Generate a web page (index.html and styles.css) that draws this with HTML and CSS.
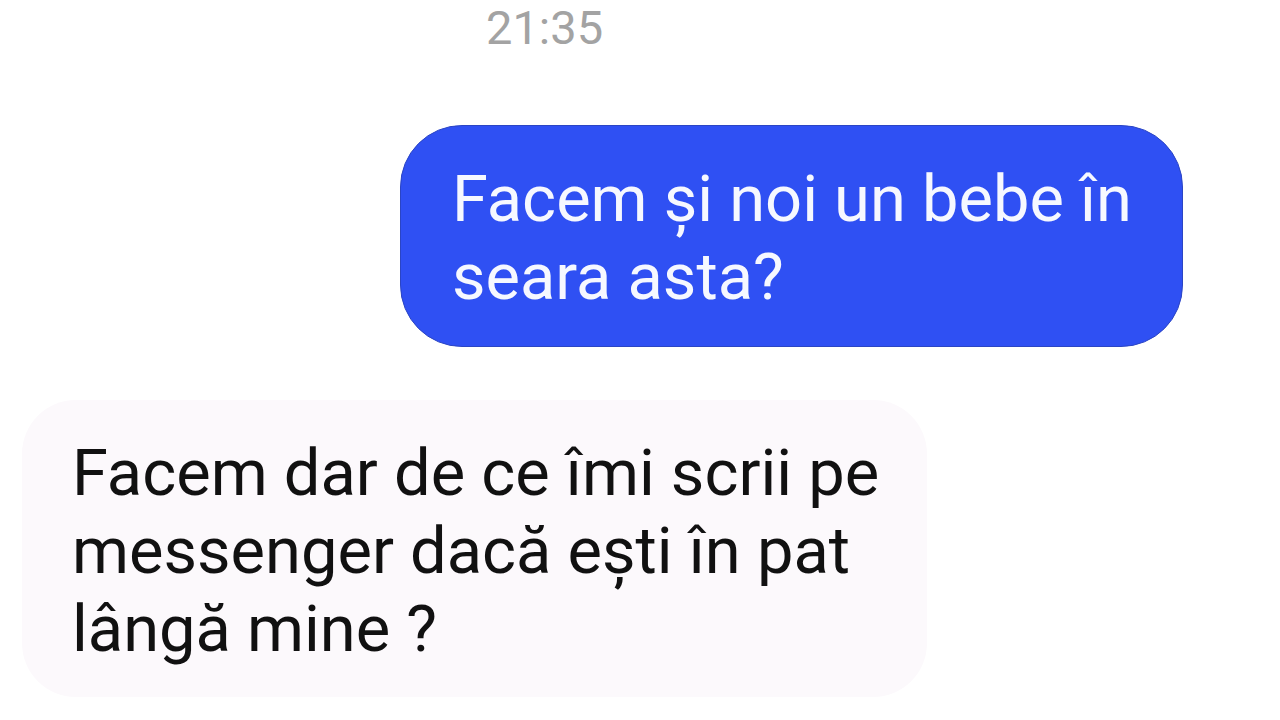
FILE: index.html
```html
<!DOCTYPE html>
<html lang="ro">
<head>
<meta charset="utf-8">
<link rel="stylesheet" href="styles.css">
</head>
<body>
<main class="chat">
  <div class="time-row"><span class="time">21:35</span></div>
  <div class="msg-row msg-row--out">
    <div class="bubble bubble--out">Facem și noi un bebe în<br>seara asta?</div>
  </div>
  <div class="msg-row msg-row--in">
    <div class="bubble bubble--in">Facem dar de ce îmi scrii pe<br>messenger dacă ești în pat<br>lângă mine ?</div>
  </div>
</main>
</body>
</html>
```
FILE: styles.css
```css
html, body {
  margin: 0;
  padding: 0;
  background: #ffffff;
}
body {
  width: 1280px;
  height: 720px;
  overflow: hidden;
  font-family: Roboto, "Noto Sans", sans-serif;
}
.chat {
  display: flex;
  flex-direction: column;
}
.time-row {
  display: flex;
  padding-left: 486px;
  height: 125px;
}
.time {
  font-size: 47px;
  line-height: 56px;
  color: #a3a3a3;
}
.msg-row {
  display: flex;
}
.msg-row--out {
  justify-content: flex-end;
  padding-right: 97px;
}
.msg-row--in {
  justify-content: flex-start;
  padding-left: 22px;
  margin-top: 53px;
}
.bubble {
  font-size: 65px;
  line-height: 78px;
}
.bubble--out {
  background: #2f50f3;
  color: #f6f8ff;
  border: 1px solid #2b45c4;
  border-radius: 62px;
  padding: 34px 50px 30px 51px;
}
.bubble--in {
  background: #fcf9fc;
  color: #111111;
  border-radius: 54px;
  padding: 34px 48px 29px 50px;
}
```
